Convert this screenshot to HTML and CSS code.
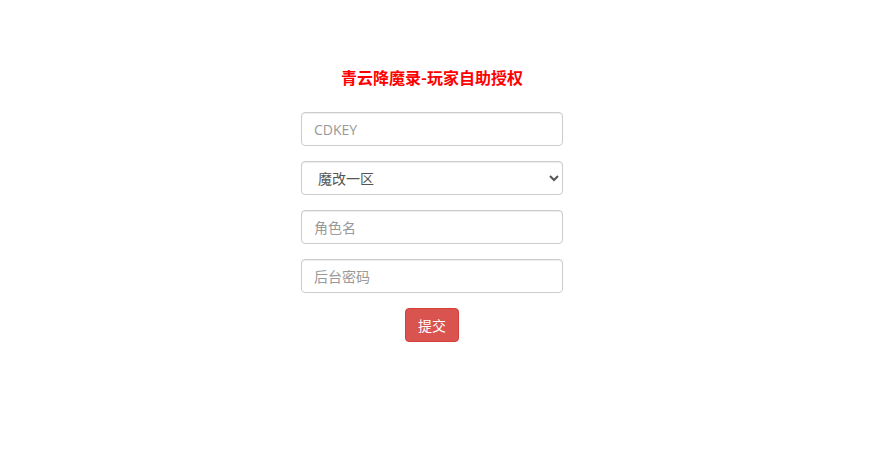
FILE: index.html
```html
<!DOCTYPE html>
<html lang="zh-CN">
<head>
<meta charset="utf-8">
<title>青云降魔录-玩家自助授权</title>
<link rel="stylesheet" href="styles.css">
</head>
<body>
<main class="page">
  <form class="auth-form">
    <h1 class="title">青云降魔录-玩家自助授权</h1>
    <input class="field" type="text" placeholder="CDKEY">
    <select class="field select">
      <option>魔改一区</option>
    </select>
    <input class="field" type="text" placeholder="角色名">
    <input class="field" type="password" placeholder="后台密码">
    <button class="btn-submit" type="button">提交</button>
  </form>
</main>
</body>
</html>
```
FILE: styles.css
```css
* { box-sizing: border-box; }
html, body { margin: 0; padding: 0; background: #fff; }
body {
  font-family: "Open Sans", "Noto Sans CJK SC", sans-serif;
  font-size: 14px;
  color: #333;
}
.page {
  display: flex;
  justify-content: center;
  padding-top: 64px;
  padding-right: 11px;
}
.auth-form {
  width: 262px;
  display: flex;
  flex-direction: column;
  align-items: center;
}
.title {
  margin: 0 0 22px;
  font-size: 16px;
  line-height: 26px;
  font-weight: bold;
  color: #ff0000;
  font-family: "Noto Sans CJK SC", sans-serif;
  white-space: nowrap;
}
.field {
  display: block;
  width: 262px;
  height: 34px;
  margin: 0 0 15px;
  padding: 6px 12px;
  font-family: "Open Sans", "Noto Sans CJK SC", sans-serif;
  font-size: 14px;
  line-height: 20px;
  color: #555;
  background: #fff;
  border: 1px solid #ccc;
  border-radius: 4px;
  box-shadow: inset 0 1px 1px rgba(0,0,0,.075);
  outline: none;
}
.field::placeholder { color: #999; }
.select {
  padding: 6px 8px 6px 12px;
  appearance: auto;
}
.btn-submit {
  width: 54px;
  height: 34px;
  padding: 6px 12px;
  font-family: "Noto Sans CJK SC", sans-serif;
  font-size: 14px;
  line-height: 20px;
  color: #fff;
  background: #d9534f;
  border: 1px solid #d43f3a;
  border-radius: 4px;
  cursor: pointer;
}
```
